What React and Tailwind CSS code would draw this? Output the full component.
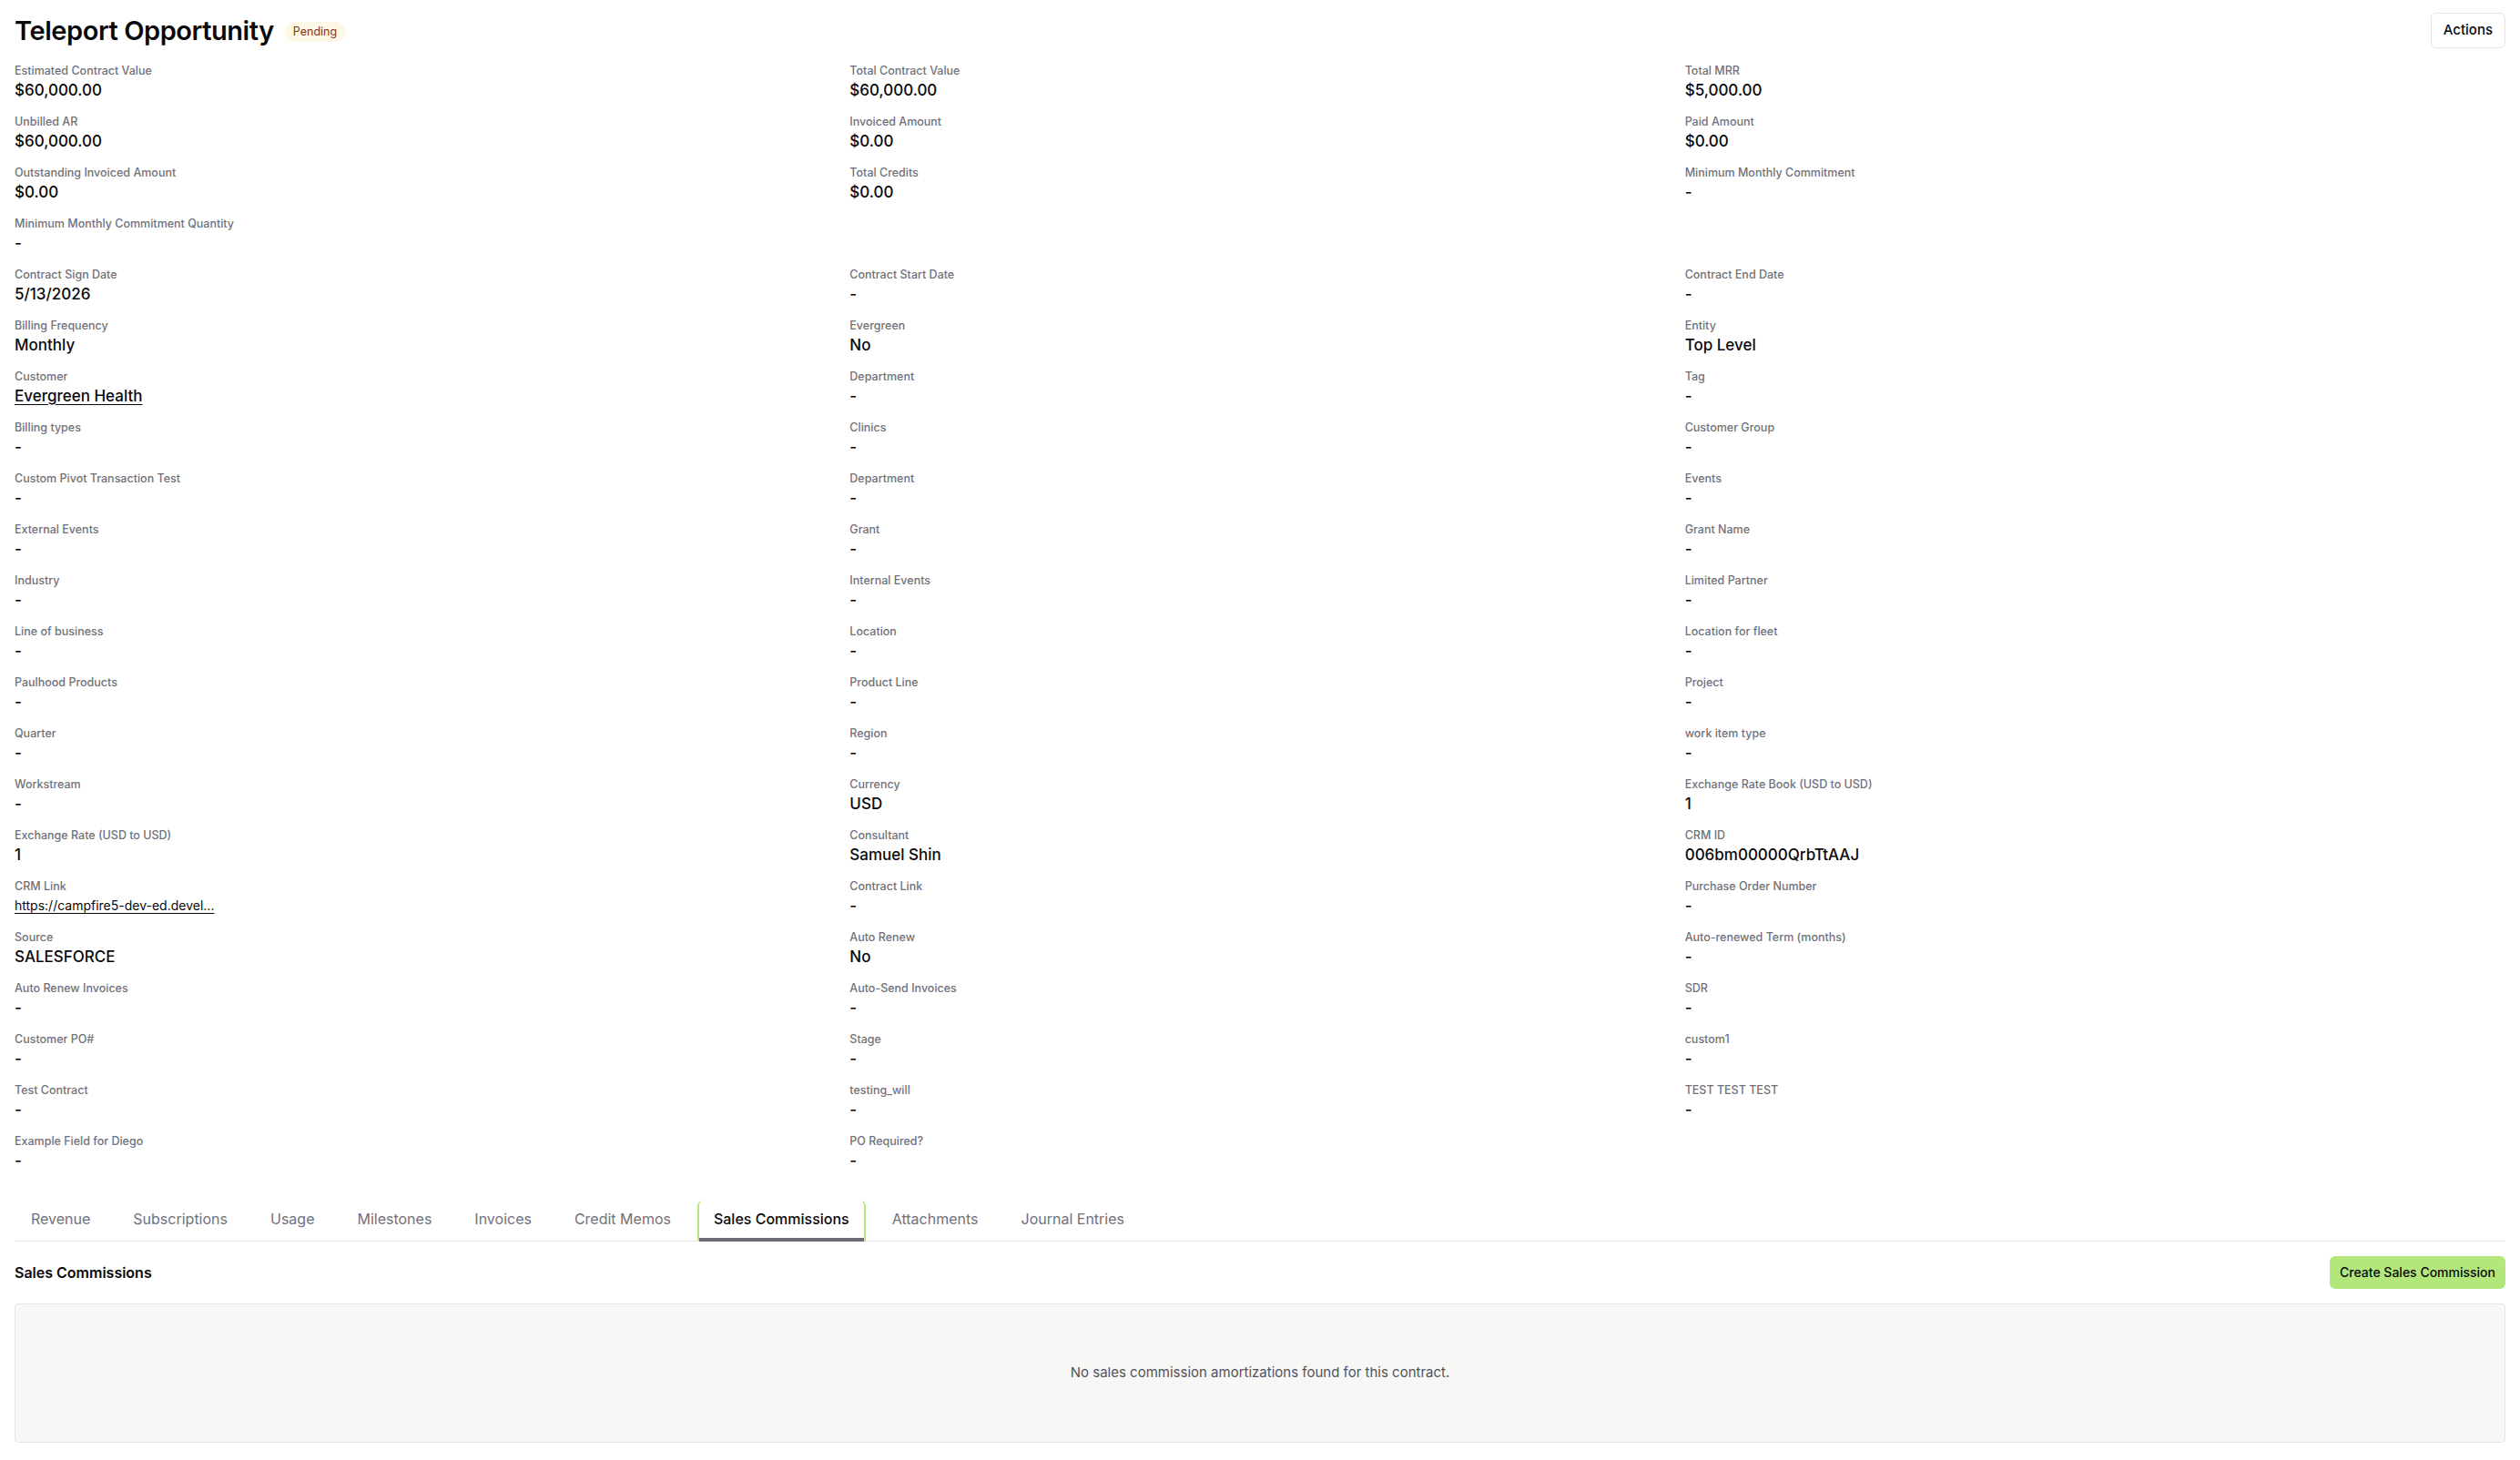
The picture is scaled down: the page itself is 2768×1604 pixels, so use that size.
import { useState } from "react";

const summaryFields = [
  { label: "Estimated Contract Value", value: "$60,000.00" },
  { label: "Total Contract Value", value: "$60,000.00" },
  { label: "Total MRR", value: "$5,000.00" },
  { label: "Unbilled AR", value: "$60,000.00" },
  { label: "Invoiced Amount", value: "$0.00" },
  { label: "Paid Amount", value: "$0.00" },
  { label: "Outstanding Invoiced Amount", value: "$0.00" },
  { label: "Total Credits", value: "$0.00" },
  { label: "Minimum Monthly Commitment", value: "-" },
  { label: "Minimum Monthly Commitment Quantity", value: "-" },
];

const crmUrl =
  "https://campfire5-dev-ed.develop.lightning.force.com/lightning/r/Opportunity/006bm00000QrbTtAAJ/view";

const detailFields = [
  { label: "Contract Sign Date", value: "5/13/2026" },
  { label: "Contract Start Date", value: "-" },
  { label: "Contract End Date", value: "-" },
  { label: "Billing Frequency", value: "Monthly" },
  { label: "Evergreen", value: "No" },
  { label: "Entity", value: "Top Level" },
  { label: "Customer", value: "Evergreen Health", link: true },
  { label: "Department", value: "-" },
  { label: "Tag", value: "-" },
  { label: "Billing types", value: "-" },
  { label: "Clinics", value: "-" },
  { label: "Customer Group", value: "-" },
  { label: "Custom Pivot Transaction Test", value: "-" },
  { label: "Department", value: "-" },
  { label: "Events", value: "-" },
  { label: "External Events", value: "-" },
  { label: "Grant", value: "-" },
  { label: "Grant Name", value: "-" },
  { label: "Industry", value: "-" },
  { label: "Internal Events", value: "-" },
  { label: "Limited Partner", value: "-" },
  { label: "Line of business", value: "-" },
  { label: "Location", value: "-" },
  { label: "Location for fleet", value: "-" },
  { label: "Paulhood Products", value: "-" },
  { label: "Product Line", value: "-" },
  { label: "Project", value: "-" },
  { label: "Quarter", value: "-" },
  { label: "Region", value: "-" },
  { label: "work item type", value: "-" },
  { label: "Workstream", value: "-" },
  { label: "Currency", value: "USD" },
  { label: "Exchange Rate Book (USD to USD)", value: "1" },
  { label: "Exchange Rate (USD to USD)", value: "1" },
  { label: "Consultant", value: "Samuel Shin" },
  { label: "CRM ID", value: "006bm00000QrbTtAAJ" },
  { label: "CRM Link", value: crmUrl, url: true },
  { label: "Contract Link", value: "-" },
  { label: "Purchase Order Number", value: "-" },
  { label: "Source", value: "SALESFORCE" },
  { label: "Auto Renew", value: "No" },
  { label: "Auto-renewed Term (months)", value: "-" },
  { label: "Auto Renew Invoices", value: "-" },
  { label: "Auto-Send Invoices", value: "-" },
  { label: "SDR", value: "-" },
  { label: "Customer PO#", value: "-" },
  { label: "Stage", value: "-" },
  { label: "custom1", value: "-" },
  { label: "Test Contract", value: "-" },
  { label: "testing_will", value: "-" },
  { label: "TEST TEST TEST", value: "-" },
  { label: "Example Field for Diego", value: "-" },
  { label: "PO Required?", value: "-" },
];

const tabs = [
  "Revenue",
  "Subscriptions",
  "Usage",
  "Milestones",
  "Invoices",
  "Credit Memos",
  "Sales Commissions",
  "Attachments",
  "Journal Entries",
];

const Field = ({ field }) => {
  let value = field.value;
  if (field.url) value = field.value.slice(0, 30) + "...";

  return (
    <div>
      <div className="text-[12.5px] leading-[18px] font-medium text-[#71717a]">
        {field.label}
      </div>
      {field.link || field.url ? (
        <a
          href="#"
          className={
            "block w-fit leading-[24px] text-[#09090b] underline underline-offset-[3px] " +
            (field.url ? "font-normal text-[14px]" : "font-medium text-[17px]")
          }
        >
          {value}
        </a>
      ) : (
        <div className="text-[17px] leading-[24px] font-medium text-[#09090b]">
          {value}
        </div>
      )}
    </div>
  );
};

const App = () => {
  const [activeTab, setActiveTab] = useState("Sales Commissions");

  return (
    <div className="min-h-screen bg-white px-4 pt-[14px] pb-5 font-['Inter',sans-serif] text-[#09090b]">
      <div className="flex justify-between items-center h-[39px]">
        <div className="flex items-center gap-[12px]">
          <h1 className="text-[29px] leading-[36px] font-semibold tracking-[-0.015em]">
            Teleport Opportunity
          </h1>
          <span className="bg-[#fdf7e6] text-[#7c3512] text-[12.5px] leading-[22px] px-[9px] rounded-full mt-[3px]">
            Pending
          </span>
        </div>
        <button className="h-[39px] px-[13px] border border-[#e4e4e7] rounded-md text-[15px] font-medium bg-white">
          Actions
        </button>
      </div>

      <div className="mt-[16px] grid grid-cols-3 gap-x-4 gap-y-[14px]">
        {summaryFields.map((f, i) => (
          <Field key={i} field={f} />
        ))}
      </div>

      <div className="mt-[14px] grid grid-cols-3 gap-x-4 gap-y-[14px]">
        {detailFields.map((f, i) => (
          <Field key={i} field={f} />
        ))}
      </div>

      <div className="mt-8 flex gap-[11px] border-b border-[#e5e5e5]">
        {tabs.map((t) => (
          <button
            key={t}
            onClick={() => setActiveTab(t)}
            className={
              "relative px-4 pt-2 pb-3 text-base leading-6 border-x-2 rounded-t-md " +
              (activeTab === t
                ? "border-[#b5e67d] text-[#09090b] font-medium"
                : "border-transparent text-[#71717a]")
            }
          >
            {t}
            {activeTab === t && (
              <span className="absolute left-0 right-0 -bottom-px h-1 bg-[#6b6b75]" />
            )}
          </button>
        ))}
      </div>

      <div className="mt-4 flex justify-between items-center">
        <h2 className="text-base font-semibold">Sales Commissions</h2>
        <button className="h-9 px-[11px] rounded-md bg-[#b3e77c] text-sm font-medium text-[#09090b]">
          Create Sales Commission
        </button>
      </div>

      <div className="mt-4 h-[153px] flex items-center justify-center bg-[#f7f7f5] border border-[#e5e5e5] rounded-sm">
        <p className="text-[15px] text-[#52525b]">
          No sales commission amortizations found for this contract.
        </p>
      </div>
    </div>
  );
};

export default App;
